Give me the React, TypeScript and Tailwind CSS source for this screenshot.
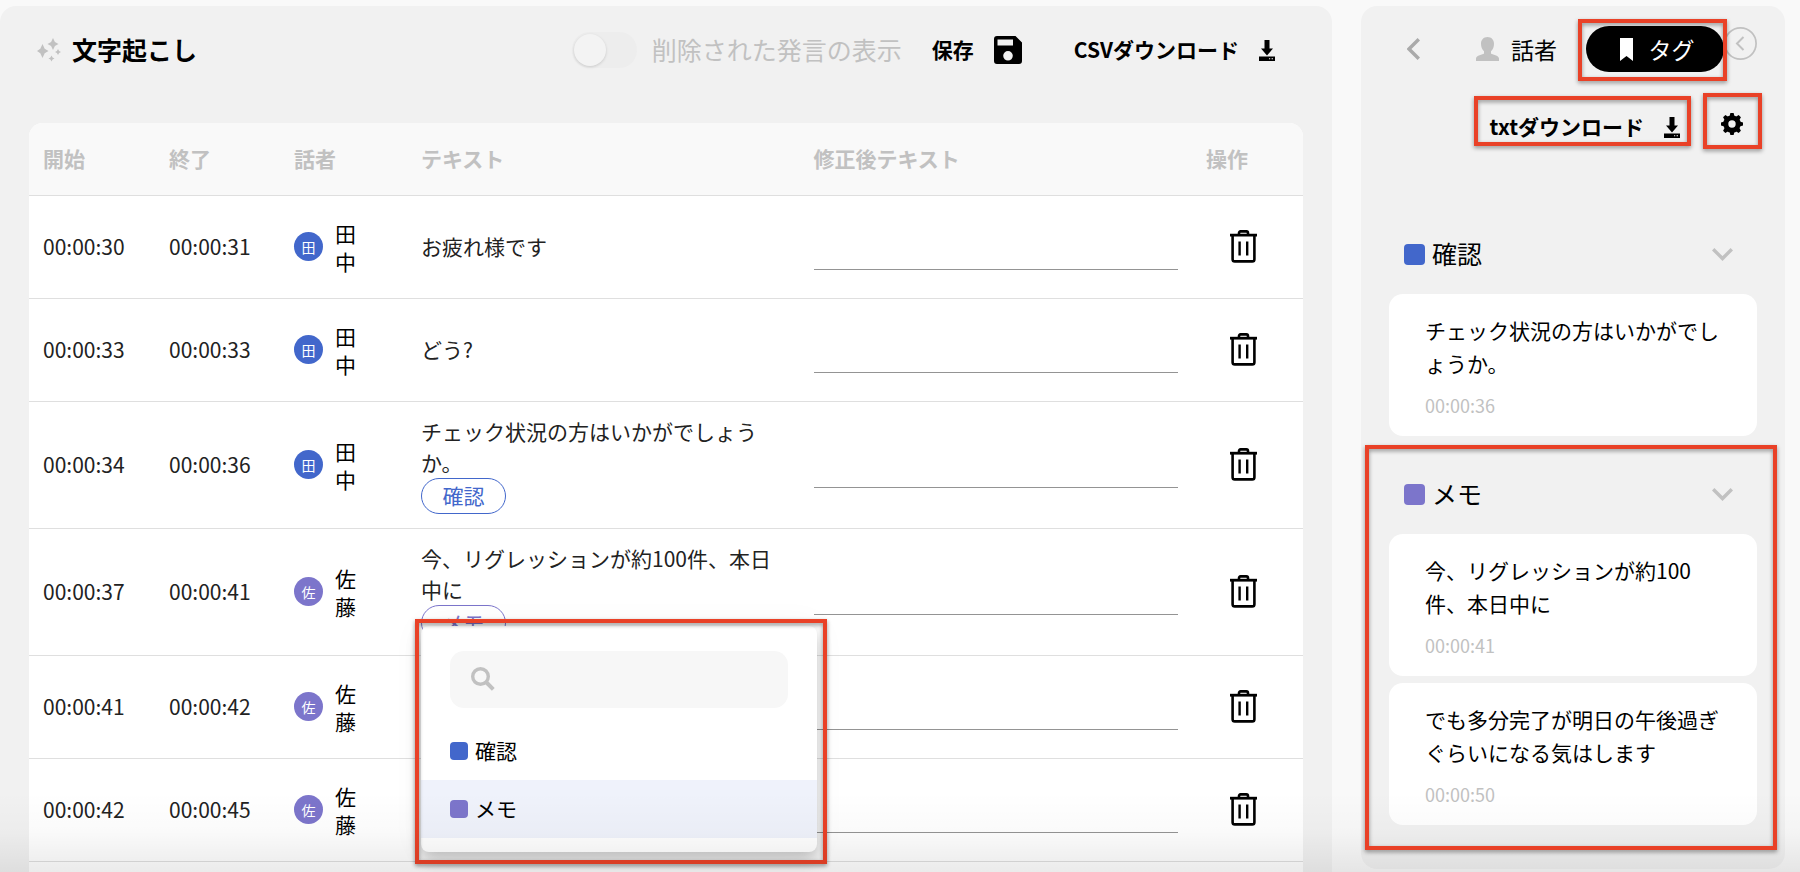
import React from 'react';
import clsx from 'clsx';

type TagName = '確認' | 'メモ';

interface Utterance {
  start: string;
  end: string;
  speaker: string;
  text?: string;
  tag?: TagName;
  menuOpen?: boolean;
}

const utterances: Utterance[] = [
  { start: '00:00:30', end: '00:00:31', speaker: '田中', text: 'お疲れ様です' },
  { start: '00:00:33', end: '00:00:33', speaker: '田中', text: 'どう?' },
  {
    start: '00:00:34',
    end: '00:00:36',
    speaker: '田中',
    text: 'チェック状況の方はいかがでしょうか。',
    tag: '確認',
  },
  {
    start: '00:00:37',
    end: '00:00:41',
    speaker: '佐藤',
    text: '今、リグレッションが約100件、本日中に',
    tag: 'メモ',
    menuOpen: true,
  },
  { start: '00:00:41', end: '00:00:42', speaker: '佐藤' },
  { start: '00:00:42', end: '00:00:45', speaker: '佐藤' },
];

const tagGroups: { name: TagName; notes: { text: string; time: string }[] }[] = [
  {
    name: '確認',
    notes: [{ text: 'チェック状況の方はいかがでしょうか。', time: '00:00:36' }],
  },
  {
    name: 'メモ',
    notes: [
      { text: '今、リグレッションが約100件、本日中に', time: '00:00:41' },
      { text: 'でも多分完了が明日の午後過ぎぐらいになる気はします', time: '00:00:50' },
    ],
  },
];

const tagBg: Record<TagName, string> = {
  確認: 'bg-[#4267cb]',
  メモ: 'bg-[#7c75cb]',
};

const tagOutline: Record<TagName, string> = {
  確認: 'border-[#4267cb] text-[#4267cb]',
  メモ: 'border-[#7c75cb] text-[#7c75cb]',
};

const speakerBg: Record<string, string> = {
  田中: 'bg-[#4267cb]',
  佐藤: 'bg-[#7c75cb]',
};

/* ---------- icons ---------- */

function SparklesIcon() {
  return (
    <svg className="w-6 h-6 shrink-0 text-[#c1c1c1]" viewBox="0 0 24 24" fill="currentColor" aria-hidden="true">
      <path d="M5.500 6 7.700 10.800 11.500 13 7.700 15.200 5.500 20 3.300 15.200 0 13 3.300 10.800Z" />
      <path d="M16 0 17.900 4.100 21.500 6 17.900 7.900 16 12 14.100 7.900 10.500 6 14.100 4.100Z" />
      <path d="M21 11 22.100 12.900 24 14 22.100 15.100 21 17 19.900 15.100 18 14 19.900 12.900Z" />
      <path d="M14.500 17.500 15.600 19.400 17.500 20.500 15.600 21.600 14.500 23.500 13.400 21.600 11.500 20.500 13.400 19.400Z" />
    </svg>
  );
}

function SaveIcon() {
  return (
    <svg className="w-7 h-7 shrink-0" viewBox="0 0 28 28" aria-hidden="true">
      <path
        fill="currentColor"
        fillRule="evenodd"
        d="M3 0H21.5L28 6.5V25a3 3 0 0 1-3 3H3a3 3 0 0 1-3-3V3a3 3 0 0 1 3-3ZM3.5 3.5V9.5H19V3.5ZM14 15a4.8 4.8 0 1 0 0 9.6 4.8 4.8 0 0 0 0-9.6Z"
      />
    </svg>
  );
}

function DownloadIcon() {
  return (
    <svg className="w-4 h-[21px] shrink-0" viewBox="0 0 16 21" aria-hidden="true">
      <path fill="currentColor" d="M5.5 0h5v8.5H14L8 15.5 2 8.500h3.500Z" />
      <path fill="currentColor" fillRule="evenodd" d="M0 16.500h16V21H0ZM10 18.300v.9h1.200v-.9ZM12.600 18.300v.9h1.400v-.9Z" />
    </svg>
  );
}

function TrashIcon() {
  return (
    <svg
      className="w-[27px] h-[33px]"
      viewBox="0 0 27 33"
      fill="none"
      stroke="currentColor"
      strokeWidth="2.600"
      aria-hidden="true"
    >
      <path d="M0 5.200h27" strokeWidth="2.800" />
      <path d="M9 5V3q0-1.600 1.600-1.600h5.800Q18 1.400 18 3v2" />
      <path d="M2.600 5v24.200q0 2.200 2.200 2.200h17.400q2.200 0 2.200-2.200V5" />
      <path d="M9.600 11.500v14M17.200 11.500v14" strokeWidth="2.400" />
    </svg>
  );
}

function SearchIcon() {
  return (
    <svg
      className="w-6 h-6 shrink-0 text-[#c1c1c1]"
      viewBox="0 0 24 24"
      fill="none"
      stroke="currentColor"
      aria-hidden="true"
    >
      <circle cx="9.5" cy="9.5" r="7.8" strokeWidth="3.4" />
      <path d="m15 15 7.3 7.3" strokeWidth="4" />
    </svg>
  );
}

function PersonIcon() {
  return (
    <svg className="w-[23px] h-6 shrink-0 text-[#c1c1c1]" viewBox="0 0 23 24" fill="currentColor" aria-hidden="true">
      <path d="M11.5 0C15.5 0 18 2.8 18 6.8c0 3-1 5.7-3 7.4v2.3c1 1.2 8 1.7 8 5V24H0v-2.500c0-3.300 7-3.800 8-5v-2.300C6 12.500 5 9.800 5 6.800 5 2.800 7.500 0 11.500 0Z" />
    </svg>
  );
}

function BookmarkIcon() {
  return (
    <svg className="w-[13px] h-[23px] shrink-0" viewBox="0 0 13 23" fill="currentColor" aria-hidden="true">
      <path d="M0 0h13v23l-6.5-5L0 23Z" />
    </svg>
  );
}

function GearIcon() {
  return (
    <svg className="w-[22px] h-[22px]" viewBox="0 0 22 22" aria-hidden="true">
      <g fill="currentColor">
        <path
          fillRule="evenodd"
          d="M11 2.300a8.700 8.700 0 1 0 0 17.400 8.700 8.700 0 0 0 0-17.400ZM11 7.300a3.700 3.700 0 1 1 0 7.400 3.700 3.700 0 0 1 0-7.400Z"
        />
        {[0, 45, 90, 135, 180, 225, 270, 315].map((deg) => (
          <path key={deg} d="M8.500 3.500 9.400 0h3.200l.9 3.500Z" transform={`rotate(${deg} 11 11)`} />
        ))}
      </g>
    </svg>
  );
}

function ChevronLeftIcon() {
  return (
    <svg className="w-[13px] h-[22px]" viewBox="0 0 13 22" fill="none" stroke="currentColor" aria-hidden="true">
      <path d="M11.8 1.2 2 11l9.8 9.8" strokeWidth="3.4" />
    </svg>
  );
}

function ChevronDownIcon() {
  return (
    <svg
      className="w-[21px] h-[13px] text-[#c1c1c1]"
      viewBox="0 0 21 13"
      fill="none"
      stroke="currentColor"
      aria-hidden="true"
    >
      <path d="m1.200 1.200 9.300 9.300 9.300-9.300" strokeWidth="3.400" />
    </svg>
  );
}

function CollapseIcon() {
  return (
    <svg className="w-[33px] h-[33px]" viewBox="0 0 33 33" fill="none" stroke="currentColor" aria-hidden="true">
      <circle cx="16.5" cy="16.5" r="15.6" strokeWidth="1.700" />
      <path d="m19.500 10-6.500 6.500 6.500 6.500" strokeWidth="2" />
    </svg>
  );
}

/* ---------- parts ---------- */

// Red outline drawn round whatever is being explained
function Callout({ className }: { className: string }) {
  return (
    <span
      aria-hidden="true"
      className={clsx(
        'pointer-events-none absolute z-30 border-4 border-[#e94127] drop-shadow-[0_2px_2px_rgba(0,0,0,0.4)]',
        className,
      )}
    />
  );
}

function TagMenu() {
  return (
    <div className="absolute left-0 top-[21px] z-10 w-[396px] rounded-lg bg-white pt-[25px] pb-[14px] text-black shadow-[0_8px_16px_rgba(0,0,0,0.2),0_0_32px_rgba(0,0,0,0.05)]">
      <label className="mx-[29px] mb-[14px] flex h-[57px] items-center gap-3 rounded-[14px] bg-[#f7f7f7] px-[21px]">
        <SearchIcon />
        <input type="text" aria-label="タグを検索" className="min-w-0 flex-1 bg-transparent outline-none" />
      </label>
      <ul>
        {tagGroups.map(({ name }) => (
          <li key={name}>
            <button
              type="button"
              className={clsx(
                'flex h-[58px] w-full items-center gap-[7px] px-[29px]',
                name === 'メモ' && 'bg-[#eff2fb]',
              )}
            >
              <span className={clsx('size-[18px] rounded', tagBg[name])} />
              {name}
            </button>
          </li>
        ))}
      </ul>
      <Callout className="-left-[6px] -right-[10px] -top-[7px] -bottom-[12px]" />
    </div>
  );
}

function UtteranceRow({ start, end, speaker, text, tag, menuOpen }: Utterance) {
  return (
    <tr className="h-[103px] border-b border-[#dfdfdf]">
      <td className="px-[14px]">{start}</td>
      <td className="px-[14px]">{end}</td>
      <td className="px-[14px]">
        <div className="flex items-center gap-3 text-black">
          <span
            className={clsx(
              'flex size-[29px] shrink-0 items-center justify-center rounded-full text-sm text-white',
              speakerBg[speaker],
            )}
          >
            {speaker[0]}
          </span>
          <span className="w-[21px] leading-7">{speaker}</span>
        </div>
      </td>
      <td className="py-[14px] pl-[14px] pr-6">
        <p>{text}</p>
        {tag && (
          <div className="relative flex">
            <button
              type="button"
              className={clsx('h-9 w-[85px] rounded-full border', tagOutline[tag])}
            >
              {tag}
            </button>
            {menuOpen && <TagMenu />}
          </div>
        )}
      </td>
      <td className="px-[14px]">
        <input
          type="text"
          aria-label={`${start} 修正後テキスト`}
          className="block h-[46px] w-full border-b border-[#949494] bg-transparent outline-none"
        />
      </td>
      <td className="px-[14px]">
        <button type="button" aria-label="削除" className="flex px-6 text-black">
          <TrashIcon />
        </button>
      </td>
    </tr>
  );
}

function Transcript() {
  return (
    <main className="flex min-w-0 flex-1 flex-col rounded-t-2xl bg-[#f1f1f1] px-[29px]">
      <header className="flex h-[88px] shrink-0 items-center pl-2 pr-[28px]">
        <h1 className="flex items-center gap-[11px] text-[25px] font-bold">
          <SparklesIcon />
          文字起こし
        </h1>
        <label className="ml-auto flex items-center gap-[15px] text-[25px] text-[#c1c1c1]">
          <input
            type="checkbox"
            className="relative h-9 w-[65px] appearance-none rounded-full bg-[#ededed] before:absolute before:left-[2px] before:top-[2px] before:size-8 before:rounded-full before:bg-[#f3f3f3] before:shadow-[0_1px_3px_rgba(0,0,0,0.15)]"
          />
          削除された発言の表示
        </label>
        <button type="button" className="ml-[30px] flex items-center gap-5 font-bold">
          保存
          <SaveIcon />
        </button>
        <button type="button" className="ml-[52px] flex items-center gap-5 font-bold">
          CSVダウンロード
          <DownloadIcon />
        </button>
      </header>
      <div className="mt-[29px] flex-1 overflow-hidden rounded-t-[14px] bg-white">
        <table className="w-full table-fixed text-left leading-[31px] text-[#222]">
          <colgroup>
            <col className="w-[126px]" />
            <col className="w-[125px]" />
            <col className="w-[127px]" />
            <col />
            <col />
            <col className="w-[111px]" />
          </colgroup>
          <thead>
            <tr className="h-[72px] border-b border-[#dfdfdf] bg-[#f9f9f9] text-[#c1c1c1]">
              {['開始', '終了', '話者', 'テキスト', '修正後テキスト', '操作'].map((label) => (
                <th key={label} scope="col" className="px-[14px] font-bold">
                  {label}
                </th>
              ))}
            </tr>
          </thead>
          <tbody>
            {utterances.map((u) => (
              <UtteranceRow key={u.start} {...u} />
            ))}
          </tbody>
        </table>
      </div>
    </main>
  );
}

function TagPanel() {
  return (
    <aside className="relative mb-[3px] w-[424px] shrink-0 rounded-2xl bg-[#f1f1f1] px-[28px] pt-5">
      <div className="flex h-[46px] items-center pl-[18px] pr-[33px]">
        <button type="button" aria-label="戻る" className="text-[#aaa]">
          <ChevronLeftIcon />
        </button>
        <button type="button" className="ml-auto flex items-center gap-3 text-[23px]">
          <PersonIcon />
          話者
        </button>
        <button
          type="button"
          className="relative ml-[29px] flex h-[46px] w-[138px] items-center justify-center gap-4 rounded-full bg-black pl-1 text-[23px] text-white"
        >
          <BookmarkIcon />
          タグ
          <Callout className="-left-2 -right-[3px] -top-[7px] -bottom-[9px]" />
        </button>
      </div>
      <button type="button" aria-label="閉じる" className="absolute right-[28px] top-[21px] text-[#c1c1c1]">
        <CollapseIcon />
      </button>

      <div className="mt-6 flex h-[56px] items-center justify-end pr-[14px]">
        <button type="button" className="relative mt-[6px] flex items-center gap-5 font-bold">
          txtダウンロード
          <DownloadIcon />
          <Callout className="-left-[15px] -right-[11px] -top-[15px] -bottom-[3px]" />
        </button>
        <button type="button" aria-label="設定" className="relative ml-[41px]">
          <GearIcon />
          <Callout className="-left-[18px] -right-[19px] -top-[20px] -bottom-[14px]" />
        </button>
      </div>

      <div className="mt-[62px] flex flex-col gap-[18px]">
        {tagGroups.map(({ name, notes }) => (
          <section key={name} className="relative">
            <h2>
              <button type="button" className="flex h-20 w-full items-center gap-[7px] pl-[15px] pr-6 text-[25px]">
                <span className={clsx('size-[21px] rounded', tagBg[name])} />
                {name}
                <span className="ml-auto">
                  <ChevronDownIcon />
                </span>
              </button>
            </h2>
            <ul className="flex flex-col gap-[7px]">
              {notes.map((note) => (
                <li key={note.time} className="rounded-[14px] bg-white pt-5 pr-7 pb-[18px] pl-9">
                  <p className="leading-[33px]">{note.text}</p>
                  <time className="mt-3 block text-lg leading-[26px] text-[#c1c1c1]">{note.time}</time>
                </li>
              ))}
            </ul>
            {name === 'メモ' && <Callout className="-left-6 -right-5 -top-[9px] -bottom-[25px]" />}
          </section>
        ))}
      </div>
    </aside>
  );
}

const App: React.FC = () => (
  <div
    lang="ja"
    className="relative flex h-screen gap-[29px] overflow-hidden bg-[#f9f9f9] pr-[15px] pt-[6px] font-['Noto_Sans_CJK_JP',sans-serif] text-[21px] text-black"
  >
    <Transcript />
    <TagPanel />
    {/* page darkens towards the bottom edge */}
    <div className="pointer-events-none absolute inset-x-0 bottom-0 z-20 h-20 bg-linear-to-b from-transparent via-black/2 to-black/8" />
  </div>
);

export default App;
